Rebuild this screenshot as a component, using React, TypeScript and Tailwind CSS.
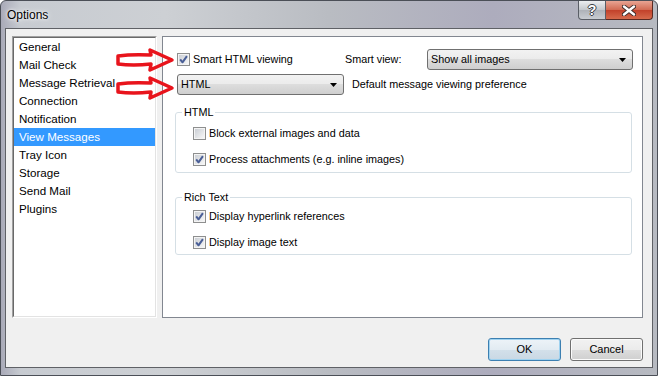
const sideItems = [
  'General',
  'Mail Check',
  'Message Retrieval',
  'Connection',
  'Notification',
  'View Messages',
  'Tray Icon',
  'Storage',
  'Send Mail',
  'Plugins',
]

function CheckBox({ checked }: { checked?: boolean }) {
  return (
    <div className="flex h-[13px] w-[13px] shrink-0 items-center justify-center border border-[#8e8f8f] bg-white">
      <div className="flex h-[11px] w-[11px] items-center justify-center border border-[#f4f4f4] bg-[linear-gradient(135deg,#cbcfd5,#f6f6f6)]">
        {checked && (
          <svg width="9" height="9" viewBox="0 0 9 9">
            <path d="M1.2 4.4 L3.5 7.3 L7.9 1.2" fill="none" stroke="#4a5f97" strokeWidth="2" strokeLinejoin="round" />
          </svg>
        )}
      </div>
    </div>
  )
}

function Check({ label, checked }: { label: string; checked?: boolean }) {
  return (
    <div className="flex h-[13px] items-center">
      <CheckBox checked={checked} />
      <span className="ml-[3px] leading-none">{label}</span>
    </div>
  )
}

function Combo({ value, width }: { value: string; width: string }) {
  return (
    <div
      className={`flex h-[21px] ${width} items-center justify-between rounded-[3px] border border-[#707070] bg-[linear-gradient(#f2f2f2_0%,#ebebeb_50%,#dddddd_50%,#cfcfcf_100%)] pl-[3px] pr-[6px]`}
    >
      <span>{value}</span>
      <svg width="7" height="4" viewBox="0 0 7 4">
        <path d="M0 0 H7 L3.5 4 Z" fill="#000" />
      </svg>
    </div>
  )
}

function Group({ title, children }: { title: string; children: React.ReactNode }) {
  return (
    <fieldset className="ml-[-2px] w-[457px] rounded-[3px] border border-[#d5dfe5] pl-[6px]">
      <legend className="px-[2px] leading-[13px]">{title}</legend>
      {children}
    </fieldset>
  )
}

function Arrow({ y }: { y: number }) {
  return (
    <path
      d={`M117 ${y - 4} Q131 ${y - 6} 150 ${y - 5} L149 ${y - 10} L171 ${y} L149 ${y + 10} L150 ${y + 4} Q132 ${y + 6} 117 ${y + 4} Z`}
      fill="none"
      stroke="#e8141c"
      strokeWidth="3.5"
      strokeLinejoin="round"
    />
  )
}

export default function App() {
  return (
    <div className="relative flex h-[376px] w-[658px] flex-col overflow-hidden rounded-t-[6px] border border-[#4b4f57] bg-[linear-gradient(90deg,#a9aab8_0%,#c7cbd1_3%,#cdd0d4_25%,#b9bcc2_50%,#adacbd_75%,#b7bac1_100%)] font-['Liberation_Sans',Arial,sans-serif] text-[10.8px] text-black">
      {/* title bar */}
      <div className="flex h-[27px] justify-between">
        <span className="pl-[6px] pt-[8px] text-[12px] leading-none [text-shadow:0_0_6px_#fff,0_0_3px_#fff]">Options</span>
        <div className="flex items-start pr-[4px]">
          <div className="flex h-[19px] w-[28px] items-center justify-center rounded-bl-[4px] border border-t-0 border-[#5a5e66] bg-[linear-gradient(#eceef0,#c3c7cc_50%,#aeb2b8_51%,#c9cdd2)]">
            <span className="text-[14px] font-bold leading-none text-white [text-shadow:1px_0_0_#3a3e44,-1px_0_0_#3a3e44,0_1px_0_#3a3e44,0_-1px_0_#3a3e44]">?</span>
          </div>
          <div className="flex h-[19px] w-[47px] items-center justify-center rounded-br-[4px] border border-l-0 border-t-0 border-[#5a2a22] bg-[linear-gradient(#e8a493,#d16a52_50%,#c2412a_51%,#d66a4c)]">
            <svg width="14" height="11" viewBox="0 0 14 11">
              <path d="M2 1.5 L12 9.5 M12 1.5 L2 9.5" stroke="#3a2a28" strokeWidth="4.2" strokeLinecap="round" />
              <path d="M2 1.5 L12 9.5 M12 1.5 L2 9.5" stroke="#fff" strokeWidth="2.4" strokeLinecap="round" />
            </svg>
          </div>
        </div>
      </div>

      {/* client area */}
      <div className="mx-[4px] mb-[7px] flex flex-1 flex-col border border-[#5f6166] bg-[#f0f0f0] pl-[6px] pr-[9px] pt-[7px]">
        <div className="flex h-[282px] gap-[5px]">
          <div className="w-[145px] border border-b-white border-l-[#a0a0a0] border-r-white border-t-[#a0a0a0]">
            <div className="h-full border border-b-[#e3e3e3] border-l-[#696969] border-r-[#e3e3e3] border-t-[#696969] bg-white">
              {sideItems.map((item) => (
                <div
                  key={item}
                  className={`flex h-[18px] items-center pl-[5px] text-[11.6px] ${
                    item === 'View Messages' ? 'bg-[#3399ff] text-white' : ''
                  }`}
                >
                  {item}
                </div>
              ))}
            </div>
          </div>

          <div className="flex-1 border border-[#828790] bg-white pl-[14px] pt-[12px]">
            <div className="flex h-[21px] items-center">
              <div className="w-[168px]">
                <Check label="Smart HTML viewing" checked />
              </div>
              <span className="w-[82px]">Smart view:</span>
              <Combo value="Show all images" width="w-[206px]" />
            </div>
            <div className="mt-[4px] flex h-[21px] items-center">
              <Combo value="HTML" width="w-[167px]" />
              <span className="ml-[8px]">Default message viewing preference</span>
            </div>

            <div className="mt-[11px]">
              <Group title="HTML">
                <div className="ml-[11px] flex flex-col gap-[13px] pb-[6px] pt-[8px]">
                  <Check label="Block external images and data" />
                  <Check label="Process attachments (e.g. inline images)" checked />
                </div>
              </Group>
            </div>

            <div className="mt-[18px]">
              <Group title="Rich Text">
                <div className="ml-[11px] flex flex-col gap-[13px] pb-[5px] pt-[6px]">
                  <Check label="Display hyperlink references" checked />
                  <Check label="Display image text" checked />
                </div>
              </Group>
            </div>
          </div>
        </div>

        <div className="mt-[20px] flex justify-end gap-[9px]">
          <button className="h-[23px] w-[73px] rounded-[3px] border border-[#3c7fb1] bg-[linear-gradient(#edf3f8,#e2ebf2_50%,#d3e0ea_51%,#c9d8e4)] shadow-[inset_0_0_0_1px_#9fd2f0] text-[11px]">
            OK
          </button>
          <button className="h-[23px] w-[73px] rounded-[3px] border border-[#707070] bg-[linear-gradient(#f2f2f2,#ebebeb_50%,#dddddd_51%,#cfcfcf)] shadow-[inset_0_0_0_1px_#fbfbfb] text-[11px]">
            Cancel
          </button>
        </div>
      </div>

      {/* annotation arrows */}
      <svg className="pointer-events-none absolute left-0 top-0" width="658" height="376">
        <Arrow y={59} />
        <Arrow y={87} />
      </svg>
    </div>
  )
}
